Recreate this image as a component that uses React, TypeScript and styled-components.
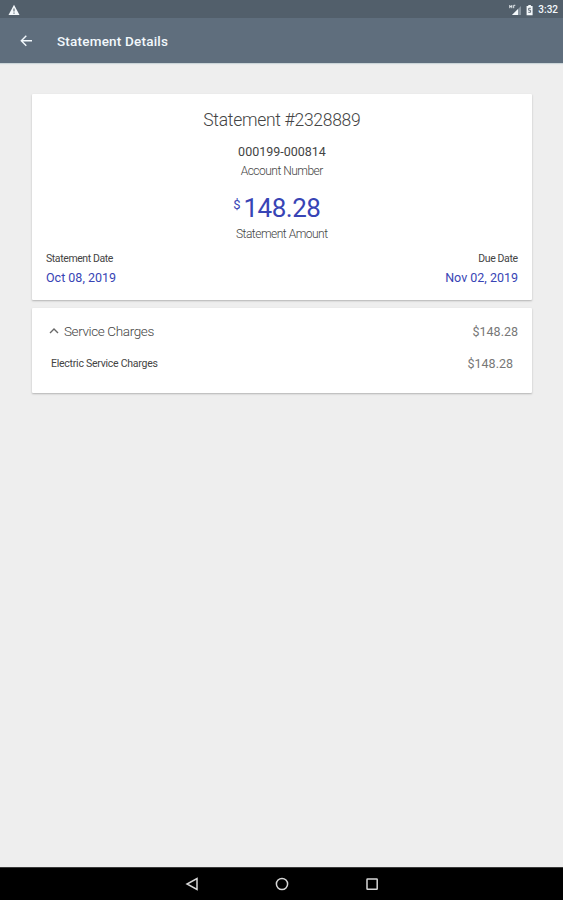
import React from "react";
import styled, { createGlobalStyle } from "styled-components";

const GlobalStyle = createGlobalStyle`
  * { box-sizing: border-box; }
  body { margin: 0; background: #eeeeee; font-family: Roboto, "Liberation Sans", sans-serif; }
`;

const Screen = styled.div`
  width: 563px;
  height: 900px;
  display: flex;
  flex-direction: column;
  background: #eeeeee;
  overflow: hidden;
`;

const StatusBar = styled.div`
  height: 18px;
  flex: none;
  display: flex;
  align-items: center;
  justify-content: space-between;
  padding: 1px 5px 0 8px;
  background: #525f6b;
  color: #f4f8fb;
`;

const StatusIcons = styled.div`
  display: flex;
  align-items: center;
`;

const AppBar = styled.header`
  height: 45px;
  flex: none;
  display: flex;
  align-items: center;
  gap: 24px;
  padding: 0 20px;
  background: #5f6e7d;
  color: #f2f8fc;
  box-shadow: 0 1px 1px #cbd5d8;
`;

const Icon = styled.svg`
  display: block;
  flex: none;
`;

const Content = styled.main`
  flex: 1;
  display: flex;
  flex-direction: column;
  gap: 8px;
  padding: 31px 31px 0 32px;
`;

const Card = styled.section<{ $height: number }>`
  height: ${(p) => p.$height}px;
  background: #ffffff;
  border-radius: 1px;
  box-shadow: 0 1px 2px rgba(0, 0, 0, 0.25);
`;

const Summary = styled(Card)`
  display: flex;
  flex-direction: column;
  align-items: center;
  padding: 15px 14px 0;
`;

const Charges = styled(Card)`
  padding: 13px 14px 0 17px;
`;

const Text = styled.span<{
  $size: number;
  $line: number;
  $color?: string;
  $weight?: number;
  $spacing?: number;
}>`
  font-size: ${(p) => p.$size}px;
  line-height: ${(p) => p.$line}px;
  color: ${(p) => p.$color ?? "#444444"};
  font-weight: ${(p) => p.$weight ?? 400};
  letter-spacing: ${(p) => p.$spacing ?? 0}px;
  margin-right: ${(p) => -(p.$spacing ?? 0)}px;
  white-space: nowrap;
`;

const AccountNumber = styled(Text)`
  margin-top: 13px;
`;

const Amount = styled.div`
  display: flex;
  align-items: flex-start;
  gap: 3px;
  margin: 10px 10px 0 0;
  height: 32px;
`;

const Currency = styled(Text)`
  margin-top: 3px;
`;

const Dates = styled.div`
  align-self: stretch;
  display: flex;
  justify-content: space-between;
  margin-top: 7px;
`;

const DateBlock = styled.div<{ $end?: boolean }>`
  display: flex;
  flex-direction: column;
  align-items: ${(p) => (p.$end ? "flex-end" : "flex-start")};
  gap: 4px;
`;

const ChargeRow = styled.div<{ $item?: boolean }>`
  display: flex;
  align-items: center;
  justify-content: space-between;
  height: 21px;
  ${(p) => p.$item && "margin-top: 11px; padding: 0 5px 0 2px;"}
`;

const ChargeLabel = styled.div`
  display: flex;
  align-items: center;
  gap: 5px;
  padding-bottom: 2px;
`;

const NavBar = styled.nav`
  height: 33px;
  flex: none;
  display: flex;
  justify-content: center;
  align-items: center;
  gap: 76px;
  background: #000000;
  border-top: 1px solid #3a3a3a;
`;

const BLUE = "#3844b5";

export default function App() {
  return (
    <>
      <GlobalStyle />
      <Screen>
        <StatusBar>
          <Icon width="12" height="12" viewBox="0 0 12 12">
            <path d="M6 .7 11.5 11H.5Z" fill="currentColor" />
            <path d="M6 4.5v3M6 8.5v1.2" stroke="#525f6b" strokeWidth="1.1" />
          </Icon>
          <StatusIcons>
            <Icon width="14" height="12" viewBox="0 0 14 12">
              <path d="M12 2v9H3Z" fill="#8995a0" />
              <path d="M9 5v6H3Z" fill="currentColor" />
              <path d="M.8 1v3.2M.8 2.6h2M2.8 1v3.2M4.7 4.2V1.3h1.6" stroke="currentColor" strokeWidth=".9" fill="none" />
            </Icon>
            <Icon width="15" height="12" viewBox="0 0 15 12">
              <path d="M3.6 2h1.7V1h2.6v1h1.7v9.2h-6Z" fill="currentColor" />
              <path d="M7.9 4.3H5.7v2h1.9v2H5.3" stroke="#525f6b" strokeWidth=".9" fill="none" />
            </Icon>
            <Text $size={10} $line={12} $weight={500} $color="#f4f8fb">3:32</Text>
          </StatusIcons>
        </StatusBar>
        <AppBar>
          <Icon width="13" height="14" viewBox="0 0 13 14" fill="none" stroke="currentColor" strokeWidth="1.4">
            <path d="M12 6.7H1.5M6.3 1.7 1.3 6.7l5 5" />
          </Icon>
          <Text $size={13.5} $line={18} $weight={500} $color="#f2f8fc" $spacing={0.2}>Statement Details</Text>
        </AppBar>
        <Content>
          <Summary $height={206}>
            <Text $size={17.5} $line={22} $weight={300} $spacing={-0.28}>Statement #2328889</Text>
            <AccountNumber $size={12.5} $line={16}>000199-000814</AccountNumber>
            <Text $size={12} $line={22} $weight={300} $spacing={-0.5}>Account Number</Text>
            <Amount>
              <Currency $size={13} $line={20} $color={BLUE}>$</Currency>
              <Text $size={26} $line={32} $color={BLUE} $spacing={-0.5}>148.28</Text>
            </Amount>
            <Text $size={12} $line={21} $weight={300} $spacing={-0.5}>Statement Amount</Text>
            <Dates>
              <DateBlock>
                <Text $size={10.5} $line={14} $spacing={-0.4}>Statement Date</Text>
                <Text $size={12.5} $line={16} $color={BLUE}>Oct 08, 2019</Text>
              </DateBlock>
              <DateBlock $end>
                <Text $size={10.5} $line={14} $spacing={-0.4}>Due Date</Text>
                <Text $size={12.5} $line={16} $color={BLUE}>Nov 02, 2019</Text>
              </DateBlock>
            </Dates>
          </Summary>
          <Charges $height={85}>
            <ChargeRow>
              <ChargeLabel>
                <Icon width="10" height="8" viewBox="0 0 10 8" fill="none" stroke="#686868" strokeWidth="1.4">
                  <path d="m1 6 4-4 4 4" />
                </Icon>
                <Text $size={13.5} $line={18} $weight={300} $spacing={-0.38}>Service Charges</Text>
              </ChargeLabel>
              <Text $size={12.5} $line={18} $color="#777777">$148.28</Text>
            </ChargeRow>
            <ChargeRow $item>
              <Text $size={10.5} $line={16} $spacing={-0.25}>Electric Service Charges</Text>
              <Text $size={12.5} $line={18} $color="#777777">$148.28</Text>
            </ChargeRow>
          </Charges>
        </Content>
        <NavBar>
          <Icon width="14" height="14" viewBox="0 0 14 14" fill="none" stroke="#d6d6d6" strokeWidth="1.5">
            <path d="M12 1.5v11L2 7Z" />
          </Icon>
          <Icon width="14" height="14" viewBox="0 0 14 14" fill="none" stroke="#d6d6d6" strokeWidth="1.5">
            <circle cx="7" cy="7" r="5.6" />
          </Icon>
          <Icon width="14" height="14" viewBox="0 0 14 14" fill="none" stroke="#d6d6d6" strokeWidth="1.5">
            <rect x="2" y="2" width="10.2" height="10.2" rx=".5" />
          </Icon>
        </NavBar>
      </Screen>
    </>
  );
}
